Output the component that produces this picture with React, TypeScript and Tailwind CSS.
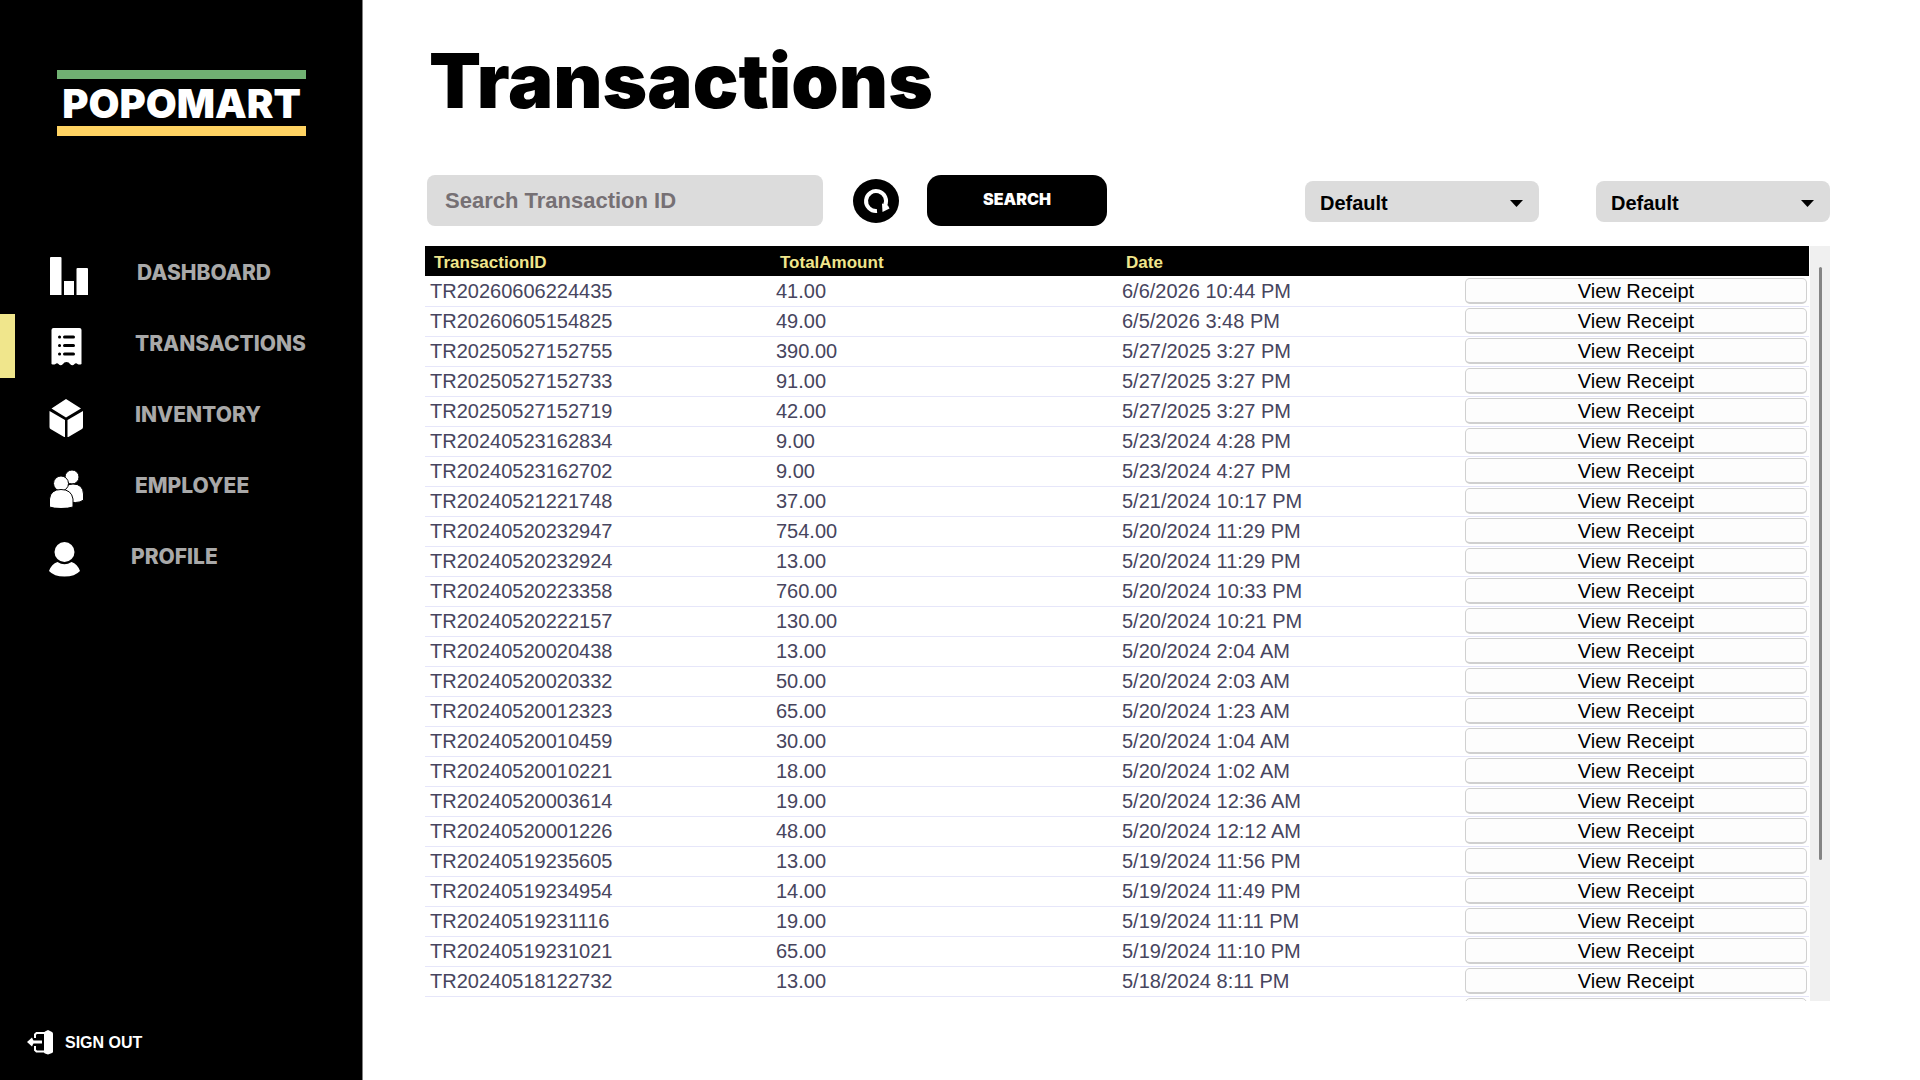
import React, { useState } from 'react';

const DashboardIcon = () => (
  <svg width="40" height="42" viewBox="0 0 40 42" fill="white" aria-hidden="true">
    <path d="M2 5a1 1 0 0 1 1-1h9.500q1 0 1 1v37H2zM16 28h10v14H16zM28.500 16q0-1 1-1h9.500q1 0 1 1v26H28.500z" />
  </svg>
);

const TransactionsIcon = () => (
  <svg width="38" height="42" viewBox="0 0 38 42" aria-hidden="true">
    <path
      fill="white"
      d="M5.500 4h26a2 2 0 0 1 2 2v34q-2 1-4 0q-1.500-1.500-3 0q-2 2.500-4.500 0q-1-2-3.500-2t-3.500 2q-2.500 2.500-4.500 0q-1.500-1.500-3 0q-2 1-4 0V6a2 2 0 0 1 2-2z"
    />
    <g stroke="black" strokeWidth="3" strokeLinecap="round">
      <path d="M11.500 13h.1M16.500 13h9M11.500 21.500h.1M16.500 21.500h9M11.500 30h.1M16.500 30h9" />
    </g>
  </svg>
);

const InventoryIcon = () => (
  <svg width="38" height="42" viewBox="0 0 38 42" fill="white" aria-hidden="true">
    <path d="M18 4l15 9.500L18 22.500L3.500 13.500zM1.500 16L17 25v17.500L2.500 34q-1-.5-1-2zM35 16L19.500 25v17.500L34 34q1-.5 1-2z" />
  </svg>
);

const EmployeeIcon = () => (
  <svg width="38" height="42" viewBox="0 0 38 42" aria-hidden="true">
    <g fill="white" stroke="black" strokeWidth="1">
      <circle cx="24" cy="11" r="7" />
      <path d="M14 36V28q2-10 11-10q10 0 10.500 10v6q-3 2.500-8 2.500z" />
      <circle cx="13" cy="17.500" r="7.500" />
      <path d="M1.500 41V33q1-9.500 11.500-9.500T25 33v8q-5 1.500-12 1.500T1.500 41z" />
    </g>
  </svg>
);

const ProfileIcon = () => (
  <svg width="34" height="42" viewBox="0 0 34 42" fill="white" aria-hidden="true">
    <circle cx="16.500" cy="15" r="10" />
    <path d="M9.500 25q7 4.500 14 0q6 2 8.500 9q-5 5.500-15.500 5.500T1 34q2.500-7 8.500-9z" />
  </svg>
);

const SignOutIcon = () => (
  <svg width="27" height="26" viewBox="0 0 27 26" aria-hidden="true">
    <path fill="white" d="M17 3q0-1 1-1.500l3-1.500l4 2q1 .5 1 1.500v18q0 1-1 1.500l-4 1.500l-3-1q-1-.5-1-1.500z" />
    <path fill="none" stroke="white" strokeWidth="2" d="M18 3H9.500l-1.500 1.500V8M8 16v4l1.500 1.500H18" />
    <path fill="none" stroke="white" strokeWidth="3" d="M3 12h12" />
    <path fill="white" d="M0 12l5-4.500l2 4.500l-2 4.500z" />
  </svg>
);

const RefreshIcon = () => (
  <svg width="46" height="44" viewBox="0 0 46 44" aria-hidden="true">
    <ellipse cx="23" cy="22" rx="23" ry="22" fill="black" />
    <path fill="none" stroke="white" strokeWidth="4" d="M24 32A10 10 0 1 1 32 26.500" />
    <path fill="white" d="M29 24.500l.5 8.500l7-3.500l-1.500-3z" />
  </svg>
);

const navItems = [
  { label: 'DASHBOARD', icon: DashboardIcon },
  { label: 'TRANSACTIONS', icon: TransactionsIcon },
  { label: 'INVENTORY', icon: InventoryIcon },
  { label: 'EMPLOYEE', icon: EmployeeIcon },
  { label: 'PROFILE', icon: ProfileIcon },
];

const transactions = [
  { id: 'TR20260606224435', amount: '41.00', date: '6/6/2026 10:44 PM' },
  { id: 'TR20260605154825', amount: '49.00', date: '6/5/2026 3:48 PM' },
  { id: 'TR20250527152755', amount: '390.00', date: '5/27/2025 3:27 PM' },
  { id: 'TR20250527152733', amount: '91.00', date: '5/27/2025 3:27 PM' },
  { id: 'TR20250527152719', amount: '42.00', date: '5/27/2025 3:27 PM' },
  { id: 'TR20240523162834', amount: '9.00', date: '5/23/2024 4:28 PM' },
  { id: 'TR20240523162702', amount: '9.00', date: '5/23/2024 4:27 PM' },
  { id: 'TR20240521221748', amount: '37.00', date: '5/21/2024 10:17 PM' },
  { id: 'TR20240520232947', amount: '754.00', date: '5/20/2024 11:29 PM' },
  { id: 'TR20240520232924', amount: '13.00', date: '5/20/2024 11:29 PM' },
  { id: 'TR20240520223358', amount: '760.00', date: '5/20/2024 10:33 PM' },
  { id: 'TR20240520222157', amount: '130.00', date: '5/20/2024 10:21 PM' },
  { id: 'TR20240520020438', amount: '13.00', date: '5/20/2024 2:04 AM' },
  { id: 'TR20240520020332', amount: '50.00', date: '5/20/2024 2:03 AM' },
  { id: 'TR20240520012323', amount: '65.00', date: '5/20/2024 1:23 AM' },
  { id: 'TR20240520010459', amount: '30.00', date: '5/20/2024 1:04 AM' },
  { id: 'TR20240520010221', amount: '18.00', date: '5/20/2024 1:02 AM' },
  { id: 'TR20240520003614', amount: '19.00', date: '5/20/2024 12:36 AM' },
  { id: 'TR20240520001226', amount: '48.00', date: '5/20/2024 12:12 AM' },
  { id: 'TR20240519235605', amount: '13.00', date: '5/19/2024 11:56 PM' },
  { id: 'TR20240519234954', amount: '14.00', date: '5/19/2024 11:49 PM' },
  { id: 'TR20240519231116', amount: '19.00', date: '5/19/2024 11:11 PM' },
  { id: 'TR20240519231021', amount: '65.00', date: '5/19/2024 11:10 PM' },
  { id: 'TR20240518122732', amount: '13.00', date: '5/18/2024 8:11 PM' },
];

function FilterSelect({ label }: { label: string }) {
  return (
    <div className="relative w-[234px]">
      <select
        aria-label={label}
        className="block w-full h-[41px] appearance-none rounded-lg bg-[#dcdcdc] pt-[2px] pl-[15px] pr-10 text-xl font-bold text-black"
      >
        <option>Default</option>
      </select>
      <svg className="pointer-events-none absolute right-4 top-[19px]" width="13" height="7" viewBox="0 0 13 7" aria-hidden="true">
        <path d="M0 0h13L6.500 7z" />
      </svg>
    </div>
  );
}

function Sidebar() {
  const [active, setActive] = useState('TRANSACTIONS');

  return (
    <aside className="flex w-[363px] shrink-0 flex-col border-r border-[#808080] bg-black pt-[70px] pb-6">
      <div className="mr-14 ml-[57px] flex h-[66px] items-center justify-center border-t-[9px] border-b-[10px] border-t-[#70b172] border-b-[#ffd362] pt-[2px]">
        <span className="font-['Inter',sans-serif] text-[40px] leading-none font-black text-white">POPOMART</span>
      </div>

      <nav className="mt-[102px] flex flex-col">
        {navItems.map(({ label, icon: Icon }) => (
          <button
            key={label}
            onClick={() => setActive(label)}
            className="relative flex h-[71px] items-center gap-[49px] pl-12 font-['Inter',sans-serif] text-[21px] font-extrabold text-[#a9a9a9]"
          >
            {active === label && <span className="absolute top-[5px] left-0 h-16 w-[15px] bg-[#f0e68c]" />}
            <Icon />
            <span className="pb-[2px]">{label}</span>
          </button>
        ))}
      </nav>

      <button className="mt-auto flex items-center gap-[11px] self-start pl-[27px] text-base font-bold text-white">
        <SignOutIcon />
        SIGN OUT
      </button>
    </aside>
  );
}

export default function App() {
  const [query, setQuery] = useState('');

  return (
    <div className="flex min-h-screen bg-white font-['Liberation_Sans',Arial,sans-serif]">
      <Sidebar />

      <main className="min-w-0 flex-1 pt-9 pr-[90px] pl-[62px]">
        <h1 className="h-[139px] pl-1 font-['Inter',sans-serif] text-[76px] leading-[89px] font-black text-black">Transactions</h1>

        <div className="flex h-[71px] items-start pl-[2px]">
          <input
            type="text"
            aria-label="Search Transaction ID"
            placeholder="Search Transaction ID"
            value={query}
            onChange={(e) => setQuery(e.target.value)}
            className="h-[51px] w-[396px] rounded-lg bg-[#dcdcdc] px-[18px] pt-px text-[22px] font-bold text-black placeholder:text-[#767074]"
          />
          <button aria-label="Refresh" onClick={() => setQuery('')} className="mt-1 ml-[30px]">
            <RefreshIcon />
          </button>
          <button className="ml-7 h-[51px] w-[180px] rounded-[14px] bg-black pb-1 font-['Inter',sans-serif] text-base font-black text-white">
            SEARCH
          </button>
          <div className="mt-[6px] ml-auto flex gap-[57px]">
            <FilterSelect label="Sort by amount" />
            <FilterSelect label="Sort by date" />
          </div>
        </div>

        <div className="flex h-[755px] overflow-hidden">
          <div className="flex-1">
            <table className="w-full table-fixed border-collapse">
              <thead>
                <tr className="h-[30px] bg-black text-left text-[17px] leading-5 text-[#f0e68c]">
                  <th className="px-[9px] pt-1 pb-0">TransactionID</th>
                  <th className="px-[9px] pt-1 pb-0">TotalAmount</th>
                  <th className="px-[9px] pt-1 pb-0">Date</th>
                  <th aria-label="Receipt" />
                </tr>
              </thead>
              <tbody>
                {transactions.map((t) => (
                  <tr key={t.id} className="h-[30px] border-b border-[#e6e6fa] text-xl leading-6 text-[#47455e]">
                    <td className="px-[5px] py-0">{t.id}</td>
                    <td className="px-[5px] py-0">{t.amount}</td>
                    <td className="px-[5px] py-0">{t.date}</td>
                    <td className="px-[2px] py-0">
                      <button className="block h-[26px] w-full overflow-hidden rounded-[5px] border border-b-2 border-[#d0d0d0] bg-[#fdfdfd] leading-6 text-black">
                        View Receipt
                      </button>
                    </td>
                  </tr>
                ))}
                <tr className="h-[30px]">
                  <td colSpan={3} />
                  <td className="px-[2px] py-0">
                    <button aria-label="View Receipt" className="block h-[26px] w-full rounded-[5px] border border-[#d0d0d0] bg-[#fdfdfd]" />
                  </td>
                </tr>
              </tbody>
            </table>
          </div>
          <div className="ml-px w-5 bg-[#f0f0f0] pt-[21px]">
            <div className="mx-auto h-[593px] w-[3px] rounded-full bg-[#858585]" />
          </div>
        </div>
      </main>
    </div>
  );
}
